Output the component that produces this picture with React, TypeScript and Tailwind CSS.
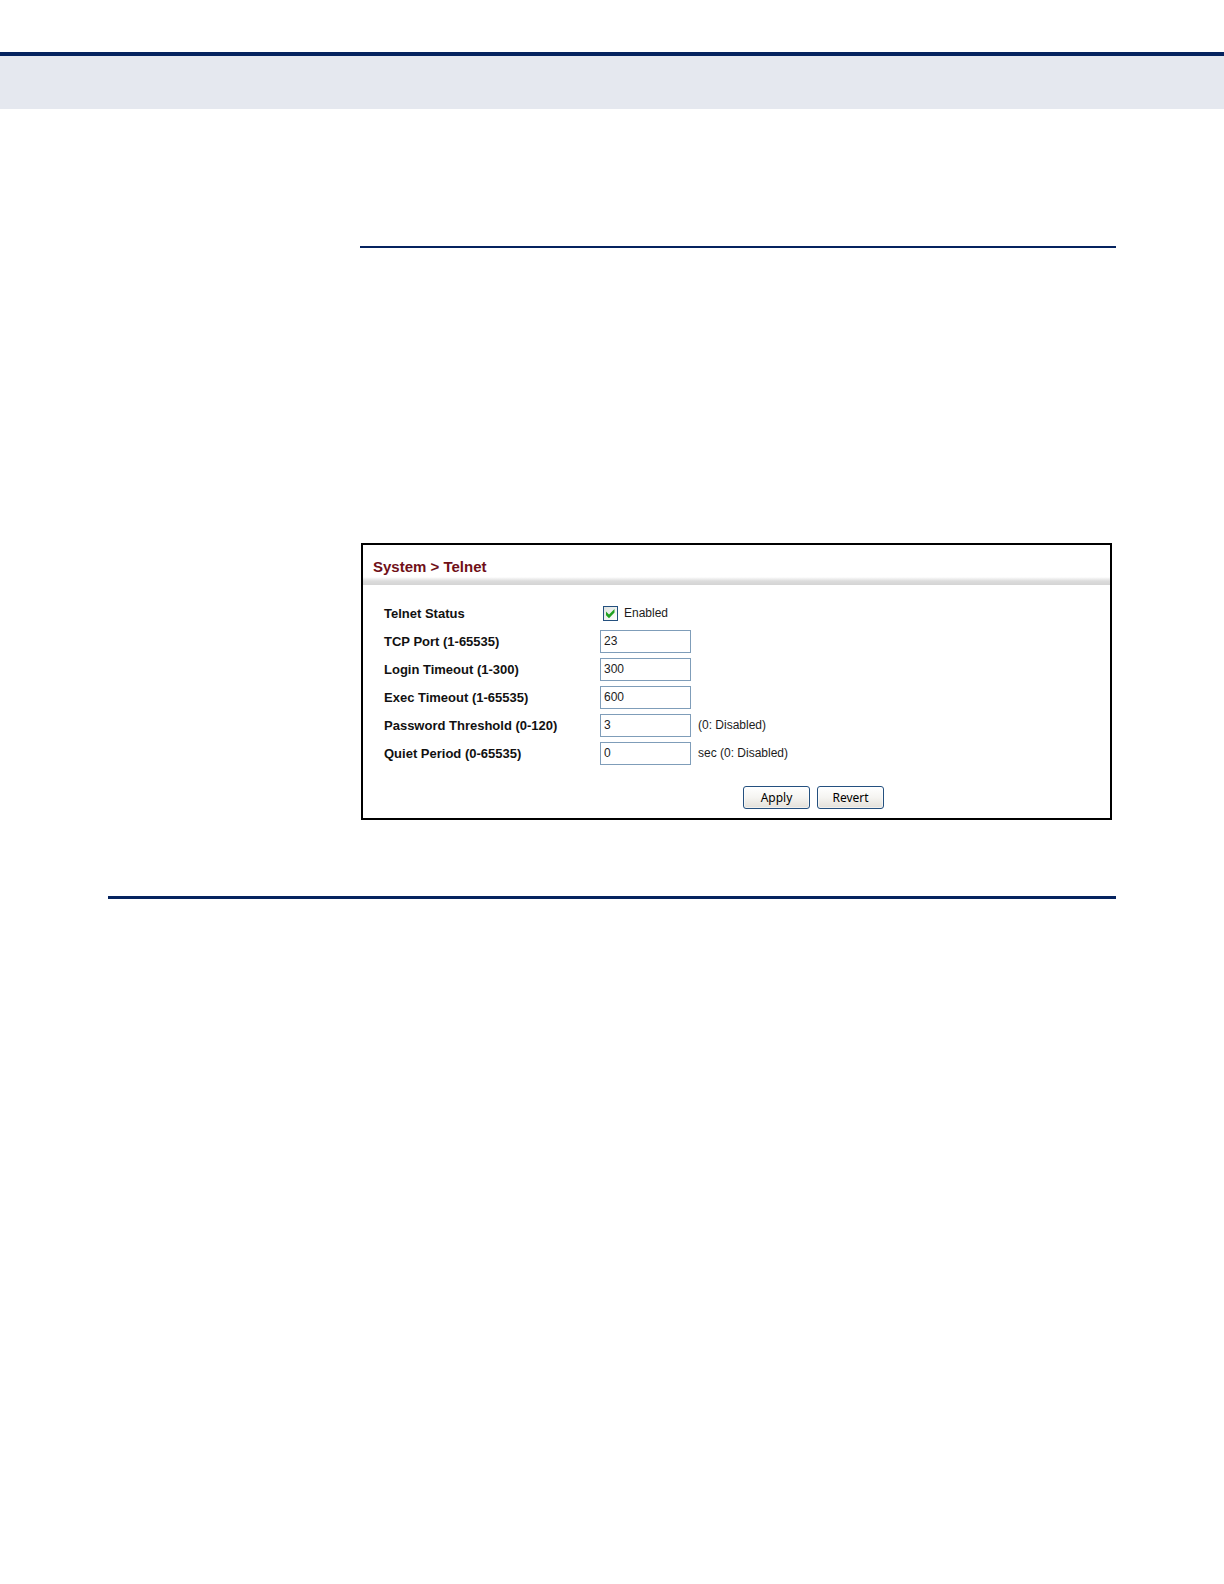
/**
 * App.tsx — System > Telnet settings
 *
 * Manual page with the Telnet configuration form of the switch.
 */

import React, { useState } from 'react';

interface Field {
  id: string;
  label: string;
  value: string;
  hint?: string;
}

const FIELDS: Field[] = [
  { id: 'tcp-port', label: 'TCP Port (1-65535)', value: '23' },
  { id: 'login-timeout', label: 'Login Timeout (1-300)', value: '300' },
  { id: 'exec-timeout', label: 'Exec Timeout (1-65535)', value: '600' },
  { id: 'password-threshold', label: 'Password Threshold (0-120)', value: '3', hint: '(0: Disabled)' },
  { id: 'quiet-period', label: 'Quiet Period (0-65535)', value: '0', hint: 'sec (0: Disabled)' },
];

const DEFAULTS: Record<string, string> = Object.fromEntries(FIELDS.map(f => [f.id, f.value]));

const BUTTON_CLASS =
  'h-[23px] w-[67px] rounded-[3px] border border-[#24507f] bg-linear-to-b from-white via-[#f5f4f1] to-[#e3e0d9] text-center font-["Noto_Sans",sans-serif] text-[12px] leading-5 text-black shadow-[inset_0_0_0_1px_#ffffff80]';

const TelnetForm: React.FC = () => {
  const [enabled, setEnabled] = useState(true);
  const [values, setValues] = useState(DEFAULTS);

  const revert = () => {
    setEnabled(true);
    setValues(DEFAULTS);
  };

  return (
    <form
      className="border-2 border-black bg-white pb-[9px]"
      onSubmit={e => e.preventDefault()}
    >
      <h1 className="px-2.5 pt-3 text-[15px] leading-5 font-bold text-[#701018]">
        System &gt; Telnet
      </h1>
      <div className="h-2 bg-linear-to-b from-white via-[#dcdcdc] to-[#d4d4d4]" />

      <div className="flex flex-col gap-[5px] pt-[17px] pl-[21px] text-[12px] leading-[23px] text-[#1c1c1c]">
        <div className="flex items-center">
          <span className="w-[216px] text-[13px] font-bold text-[#111111]">Telnet Status</span>
          <label className="flex items-center gap-1.5 pl-[3px]">
            <span className="relative flex">
              <input
                type="checkbox"
                checked={enabled}
                onChange={e => setEnabled(e.target.checked)}
                className="peer size-[15px] appearance-none border border-[#24507f] bg-linear-to-br from-[#dfe3e0] to-white"
              />
              <svg
                viewBox="0 0 15 15"
                className="pointer-events-none absolute inset-0 hidden size-[15px] peer-checked:block"
              >
                <path d="M3 5.5 L6 8.5 L11.5 3 V6.5 L6 12.2 L3 9.2 Z" fill="#21a121" />
              </svg>
            </span>
            Enabled
          </label>
        </div>

        {FIELDS.map(f => (
          <div key={f.id} className="flex items-center">
            <label htmlFor={f.id} className="w-[216px] text-[13px] font-bold text-[#111111]">
              {f.label}
            </label>
            <input
              id={f.id}
              type="text"
              value={values[f.id]}
              onChange={e => setValues({ ...values, [f.id]: e.target.value })}
              className="h-[23px] w-[91px] border border-[#7f9db9] bg-white px-[3px]"
            />
            {f.hint && <span className="pl-[7px]">{f.hint}</span>}
          </div>
        ))}
      </div>

      <div className="flex gap-[7px] pt-[21px] pl-[380px]">
        <button type="submit" className={BUTTON_CLASS}>
          Apply
        </button>
        <button type="button" onClick={revert} className={BUTTON_CLASS}>
          Revert
        </button>
      </div>
    </form>
  );
};

export default function App() {
  return (
    <div className="min-h-screen bg-white font-['Liberation_Sans',Arial,sans-serif]">
      <header className="pt-[52px]">
        <div className="h-[57px] border-t-4 border-[#05235f] bg-[#e5e8ef]" />
      </header>

      <main className="px-[108px] pt-[137px]">
        <section className="pl-[252px]">
          <hr className="border-t-2 border-[#05235f]" />
          {/* body copy area */}
          <div className="h-[295px]" />
          <div className="pr-1 pl-px">
            <TelnetForm />
          </div>
        </section>
        <hr className="mt-[76px] border-t-[3px] border-[#05235f]" />
      </main>
    </div>
  );
}
